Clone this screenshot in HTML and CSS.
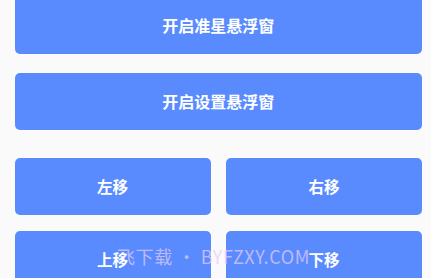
FILE: index.html
```html
<!DOCTYPE html>
<html lang="zh">
<head>
<meta charset="utf-8">
<link rel="stylesheet" href="styles.css">
</head>
<body>
<main class="page">
  <button class="btn btn-first">开启准星悬浮窗</button>
  <button class="btn btn-second">开启设置悬浮窗</button>
  <div class="grid">
    <button class="btn">左移</button>
    <button class="btn">右移</button>
    <button class="btn">上移</button>
    <button class="btn">下移</button>
  </div>
</main>
<div class="watermark">飞下载 • BYFZXY.COM</div>
</body>
</html>
```
FILE: styles.css
```css
html, body {
  margin: 0;
  padding: 0;
  background: #fafafa;
  overflow: hidden;
  height: 278px;
}
body {
  font-family: "Noto Sans CJK SC", "Noto Sans", sans-serif;
  position: relative;
}
.page {
  display: flex;
  flex-direction: column;
  padding: 0 9px 0 14.6px;
  margin-top: -3.7px;
}
.btn {
  height: 57.6px;
  border: none;
  border-radius: 5px;
  background: #598bff;
  color: #ffffff;
  font-family: "Noto Sans CJK SC", "Noto Sans", sans-serif;
  font-weight: 700;
  font-size: 16px;
  padding: 0;
  width: 100%;
}
.btn-second {
  margin-top: 18.7px;
}
.grid {
  margin-top: 27.4px;
  display: grid;
  grid-template-columns: 1fr 1fr;
  gap: 15.4px 15.4px;
}
.grid .btn {
  font-size: 15.5px;
}
.watermark {
  position: absolute;
  left: 117px;
  top: 243px;
  font-family: "Noto Sans CJK SC", "Open Sans", sans-serif;
  font-weight: 400;
  font-size: 18px;
  letter-spacing: 0.6px;
  color: rgba(232, 205, 245, 0.72);
  white-space: nowrap;
}
```
